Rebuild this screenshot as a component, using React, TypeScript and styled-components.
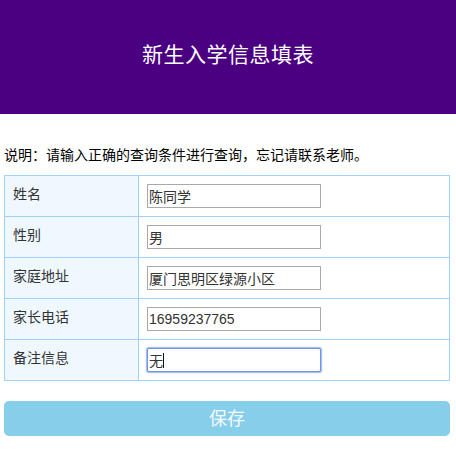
import React from "react";
import styled, { createGlobalStyle } from "styled-components";

const Global = createGlobalStyle`
  html, body { margin: 0; padding: 0; background: #fff; }
  body { font-family: "Liberation Sans", "Noto Sans CJK SC", sans-serif; font-size: 14px; color: #000; }
`;

const Header = styled.header`
  height: 114px;
  background: #4b0082;
  display: flex;
  align-items: center;
  justify-content: center;
`;

const Title = styled.h1`
  margin: 0;
  padding-bottom: 8px;
  font-size: 21px;
  font-weight: normal;
  color: #fff;
  letter-spacing: 0.5px;
`;

const Main = styled.main`
  padding: 0 6px 0 4px;
`;

const Note = styled.p`
  margin: 31px 0 10px;
  line-height: 20px;
  font-size: 14px;
`;

const Table = styled.table`
  width: 100%;
  border-collapse: collapse;
`;

const Row = styled.tr`
  height: 41px;
`;

const Label = styled.td`
  width: 134px;
  box-sizing: border-box;
  padding: 0 8px;
  border: 1px solid #a3d0fb;
  background: #f0f8ff;
  color: #333;
  font-size: 14px;
  vertical-align: middle;
  line-height: 16px;
  padding-bottom: 4px;
`;

const Cell = styled.td`
  padding: 0 8px;
  border: 1px solid #a3d0fb;
  vertical-align: middle;
`;

const Field = styled.span`
  position: relative;
  display: inline-block;
  vertical-align: middle;
`;

const Input = styled.input<{ $focused?: boolean }>`
  display: block;
  box-sizing: border-box;
  width: 174px;
  height: 24px;
  margin: 0;
  padding: 0 1px;
  font-family: "Liberation Sans", "Noto Sans CJK SC", sans-serif;
  font-size: 14px;
  color: #333;
  background: #fff;
  border: 1px solid ${(p) => (p.$focused ? "#6f97e6" : "#a9a9a9")};
  border-radius: ${(p) => (p.$focused ? "2px" : "0")};
  box-shadow: ${(p) => (p.$focused ? "0 0 1px 0.5px #9db9f0" : "none")};
  outline: none;
`;

const Caret = styled.span`
  position: absolute;
  left: 16px;
  top: 5px;
  width: 1px;
  height: 15px;
  background: #111;
`;

const SaveButton = styled.button`
  display: block;
  width: 100%;
  height: 35px;
  margin-top: 20px;
  padding: 0 0 3px;
  border: none;
  border-radius: 5px;
  background: #87ceeb;
  color: #f4fbff;
  font-family: "Liberation Sans", "Noto Sans CJK SC", sans-serif;
  font-size: 18px;
  cursor: pointer;
`;

const rows: { label: string; value: string; focused?: boolean }[] = [
  { label: "姓名", value: "陈同学" },
  { label: "性别", value: "男" },
  { label: "家庭地址", value: "厦门思明区绿源小区" },
  { label: "家长电话", value: "16959237765" },
  { label: "备注信息", value: "无", focused: true },
];

export default function App() {
  return (
    <>
      <Global />
      <Header>
        <Title>新生入学信息填表</Title>
      </Header>
      <Main>
        <Note>说明：请输入正确的查询条件进行查询，忘记请联系老师。</Note>
        <Table>
          <tbody>
            {rows.map((r) => (
              <Row key={r.label}>
                <Label>{r.label}</Label>
                <Cell>
                  <Field>
                    <Input $focused={r.focused} defaultValue={r.value} readOnly />
                    {r.focused && <Caret />}
                  </Field>
                </Cell>
              </Row>
            ))}
          </tbody>
        </Table>
        <SaveButton>保存</SaveButton>
      </Main>
    </>
  );
}
